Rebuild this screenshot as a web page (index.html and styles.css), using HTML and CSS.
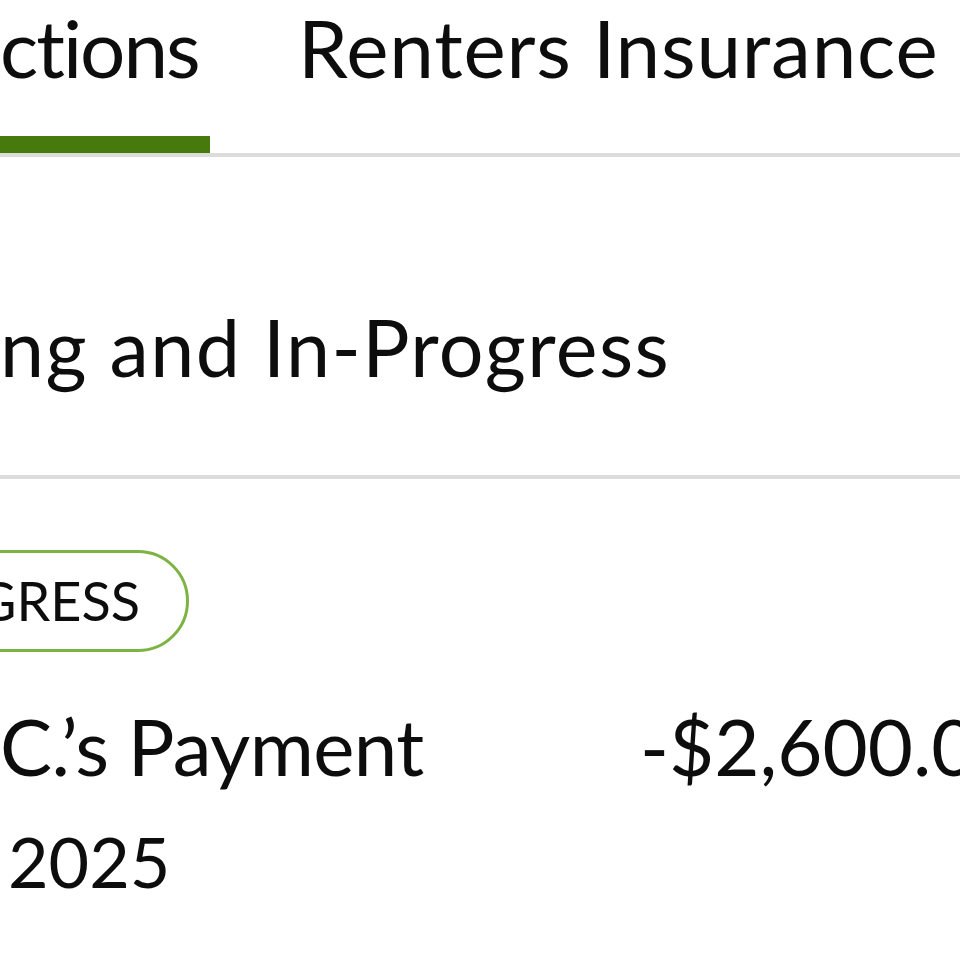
FILE: index.html
```html
<!DOCTYPE html>
<html lang="en">
<head>
<meta charset="utf-8">
<title>Transactions</title>
<link rel="stylesheet" href="styles.css">
</head>
<body>
<div class="page">
  <nav class="tabs">
    <div class="tab tab-active">ctions</div>
    <div class="tab">Renters Insurance</div>
  </nav>
  <section class="section">
    <h2 class="section-title">ng and In-Progress</h2>
  </section>
  <div class="list">
    <span class="pill">GRESS</span>
    <div class="row">
      <div class="row-name">C.’s Payment</div>
      <div class="row-amount">-$2,600.0</div>
    </div>
    <div class="row-date">2025</div>
  </div>
</div>
</body>
</html>
```
FILE: styles.css
```css
html, body {
  margin: 0;
  padding: 0;
  background: #ffffff;
}
body {
  width: 960px;
  height: 960px;
  overflow: hidden;
  font-family: "Lato", "Open Sans", sans-serif;
  font-variant-ligatures: none;
  color: #0d0d0d;
}
.page {
  width: 960px;
}
.tabs {
  display: flex;
  align-items: flex-end;
  height: 153px;
  border-bottom: 4px solid #dcdcdc;
}
.tab {
  font-size: 80px;
  line-height: 1;
  height: 153px;
  box-sizing: border-box;
  padding-top: 7px;
  letter-spacing: 0.8px;
  white-space: nowrap;
}
.tab-active {
  width: 210px;
  border-bottom: 17px solid #467a0c;
  margin-right: 88px;
  letter-spacing: -2px;
}
.section {
  height: 318px;
  border-bottom: 4px solid #dcdcdc;
}
.section-title {
  margin: 0;
  padding-top: 150px;
  font-size: 79px;
  font-weight: 400;
  line-height: 1;
  letter-spacing: 1.4px;
  white-space: nowrap;
}
.list {
  display: flex;
  flex-direction: column;
  align-items: flex-start;
  padding-top: 71px;
}
.pill {
  display: inline-flex;
  align-items: center;
  height: 96px;
  padding: 0 46px 0 56px;
  margin-left: -82px;
  border: 3px solid #7cb342;
  border-radius: 51px;
  font-size: 54px;
  line-height: 1;
}
.row {
  display: grid;
  grid-template-columns: 640px auto;
  width: 1200px;
  margin-top: 55px;
  font-size: 78px;
  line-height: 1;
  white-space: nowrap;
}
.row-name {
  letter-spacing: -0.6px;
}
.row-date {
  padding-left: 8px;
  margin-top: 41px;
  font-size: 70px;
  line-height: 1;
}
```
